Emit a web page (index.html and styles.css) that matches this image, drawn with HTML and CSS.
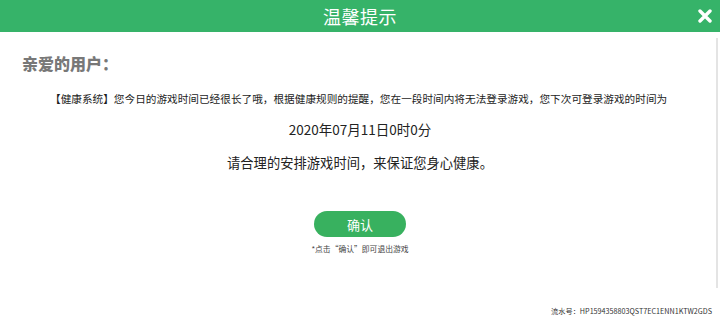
FILE: index.html
```html
<!DOCTYPE html>
<html>
    <head>
        <title>温馨提示</title>
        <link rel="stylesheet" href="styles.css">
    </head>
    <body>
        <div class="dialog">
            <div class="head">
                <h1>温馨提示</h1>
                <span class="close">
                    <svg width="14" height="14" viewBox="0 0 14 14"><path d="M2 2 L12 12 M12 2 L2 12" stroke="#fff" stroke-width="3.4" stroke-linecap="round"/></svg>
                </span>
            </div><!--head-->

            <div class="content">
                <h2 class="hello">亲爱的用户：</h2>
                <p class="msg">【健康系统】您今日的游戏时间已经很长了哦，根据健康规则的提醒，您在一段时间内将无法登录游戏，您下次可登录游戏的时间为</p>
                <p class="date">2020年07月11日0时0分</p>
                <p class="tip">请合理的安排游戏时间，来保证您身心健康。</p>

                <div class="btnBox">
                    <button>确认</button>
                    <p class="note">*点击“确认”即可退出游戏</p>
                </div>
            </div><!--content-->

            <p class="serial">流水号：HP1594358803QST7EC1ENN1KTW2GDS</p>
            <span class="bar"></span>
        </div><!--dialog-->
    </body>
</html>
```

FILE: styles.css
```css
*{margin:0;padding:0;box-sizing:border-box;}
body{
    background:#fff;
    font-family: 'Noto Sans CJK SC', 'Noto Sans', sans-serif;
    color:#222;
}
.dialog{
    position: relative;
    width:720px;
    height:324px;
}
.head{
    height:32px;
    background:#36b369;
    display:flex;
    align-items:center;
    justify-content:center;
    position:relative;
}
.head h1{
    font-size:18px;
    font-weight:normal;
    color:#fff;
    line-height:32px;
    letter-spacing:0.5px;
}
.close{
    position:absolute;
    right:8px;
    top:9px;
    width:14px;
    height:14px;
}
.close svg{display:block;}

.content{
    padding:18px 0 0 22px;
}
.hello{
    font-size:16px;
    font-weight:900;
    color:#787878;
    line-height:26px;
}
.msg{
    font-size:10.65px;
    color:#1c1c1c;
    margin:15px 0 0 28px;
    line-height:16px;
}
.date{
    text-align:center;
    font-size:13.5px;
    margin:12px 22px 0 0;
    line-height:20px;
}
.tip{
    text-align:center;
    font-size:13.3px;
    margin:13px 22px 0 0;
    line-height:22px;
}
.btnBox{
    display:flex;
    flex-direction:column;
    align-items:center;
    margin:37px 22px 0 0;
}
button{
    width:92px;
    height:26px;
    border:0;
    border-radius:13px;
    background:#38b15f;
    color:#fff;
    font-family: 'Noto Sans CJK SC', sans-serif;
    font-size:13px;
}
.note{
    font-size:7.8px;
    color:#444;
    margin-top:6px;
    line-height:12px;
}
.serial{
    position:absolute;
    right:8px;
    bottom:8px;
    font-size:7.2px;
    color:#333;
}
.bar{
    position:absolute;
    right:2px;
    top:38px;
    width:2px;
    height:250px;
    background:#e4e4e4;
}
```
